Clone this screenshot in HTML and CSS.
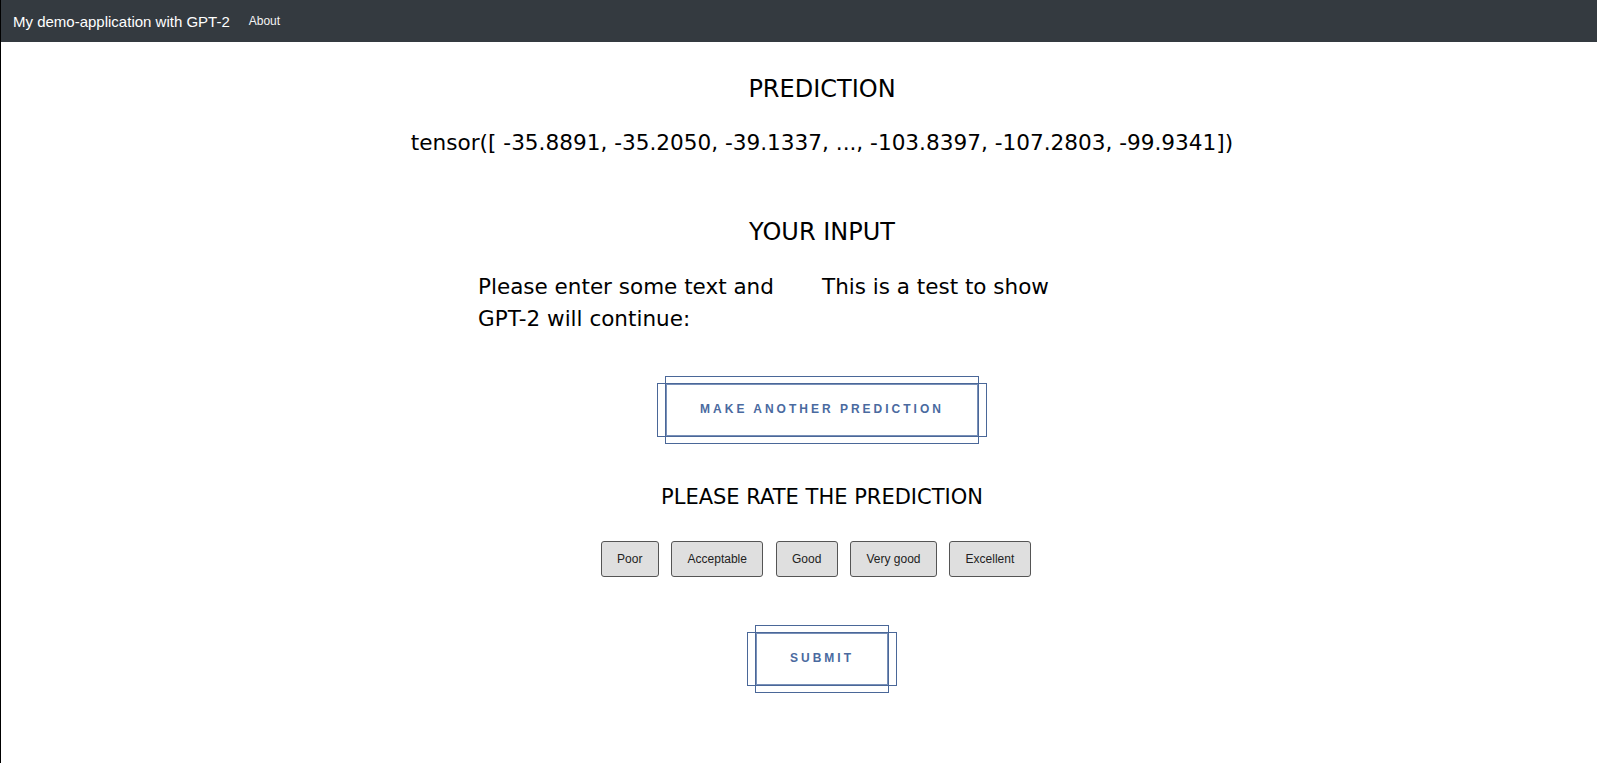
FILE: index.html
```html
<!DOCTYPE html>
<html lang="en">
<head>
<meta charset="utf-8">
<title>My demo-application with GPT-2</title>
<link rel="stylesheet" href="styles.css">
</head>
<body>
<nav class="navbar">
  <a class="brand" href="#">My demo-application with GPT-2</a>
  <a class="nav-link" href="#">About</a>
</nav>
<main class="content">
  <h2 class="section-title">PREDICTION</h2>
  <p class="prediction">tensor([ -35.8891, -35.2050, -39.1337, ..., -103.8397, -107.2803, -99.9341])</p>
  <h2 class="section-title input-title">YOUR INPUT</h2>
  <div class="input-row">
    <label class="input-label">Please enter some text and GPT-2 will continue:</label>
    <div class="input-value">This is a test to show</div>
  </div>
  <button class="fancy-btn another" type="button">MAKE ANOTHER PREDICTION</button>
  <h3 class="rate-title">PLEASE RATE THE PREDICTION</h3>
  <div class="rating">
    <button class="rate-btn" type="button">Poor</button>
    <button class="rate-btn" type="button">Acceptable</button>
    <button class="rate-btn" type="button">Good</button>
    <button class="rate-btn" type="button">Very good</button>
    <button class="rate-btn" type="button">Excellent</button>
  </div>
  <button class="fancy-btn submit" type="button">SUBMIT</button>
</main>
</body>
</html>
```
FILE: styles.css
```css
* {
  box-sizing: border-box;
}

html, body {
  margin: 0;
  padding: 0;
}

body {
  min-height: 100vh;
  border-left: 1px solid #000;
  background: #fff;
  color: #000;
  font-family: "DejaVu Sans", Verdana, sans-serif;
}

.navbar {
  display: flex;
  align-items: center;
  height: 42px;
  padding-left: 12px;
  background: #343a40;
  font-family: "Liberation Sans", Arial, sans-serif;
}

.brand {
  font-size: 15px;
  color: #fff;
  text-decoration: none;
}

.nav-link {
  margin-left: 19px;
  font-size: 12px;
  color: #f4f4f4;
  text-decoration: none;
}

.content {
  padding: 33px 0 40px 46px;
  text-align: center;
}

.section-title {
  margin: 0;
  font-size: 24px;
  line-height: 28px;
  font-weight: normal;
}

.prediction {
  margin: 24px 0 0;
  font-size: 21.6px;
  line-height: 1.5;
}

.input-title {
  margin-top: 59px;
}

.input-row {
  display: grid;
  grid-template-columns: 344px 344px;
  justify-content: center;
  margin-top: 24.5px;
  font-size: 21.5px;
  line-height: 1.5;
  text-align: left;
}

.fancy-btn {
  position: relative;
  display: block;
  margin: 47.8px auto 0;
  padding: 17px 33px;
  border: 2px solid #7890b8;
  background: #fff;
  color: #4a6a9f;
  font-family: "Liberation Sans", Arial, sans-serif;
  font-size: 12px;
  font-weight: bold;
  line-height: 15.5px;
  letter-spacing: 3px;
  cursor: pointer;
}

.fancy-btn::before,
.fancy-btn::after {
  content: "";
  position: absolute;
  border: 1px solid #4a6798;
  pointer-events: none;
}

.fancy-btn::before {
  top: -9px;
  bottom: -9.5px;
  left: -2px;
  right: -2px;
}

.fancy-btn::after {
  top: -2px;
  bottom: -2px;
  left: -10px;
  right: -10px;
}

.rate-title {
  margin: 45.5px 0 0;
  font-size: 21px;
  line-height: 31.5px;
  font-weight: normal;
}

.rating {
  display: flex;
  justify-content: center;
  margin-top: 27.7px;
}

.rate-btn {
  height: 35.5px;
  margin-right: 12.6px;
  padding: 0 15.25px;
  border: 1px solid #555;
  border-radius: 3px;
  background: #dfdfdf;
  color: #222;
  font-family: "Liberation Sans", Arial, sans-serif;
  font-size: 12px;
  cursor: pointer;
}

.submit {
  margin-top: 55.5px;
}
```
